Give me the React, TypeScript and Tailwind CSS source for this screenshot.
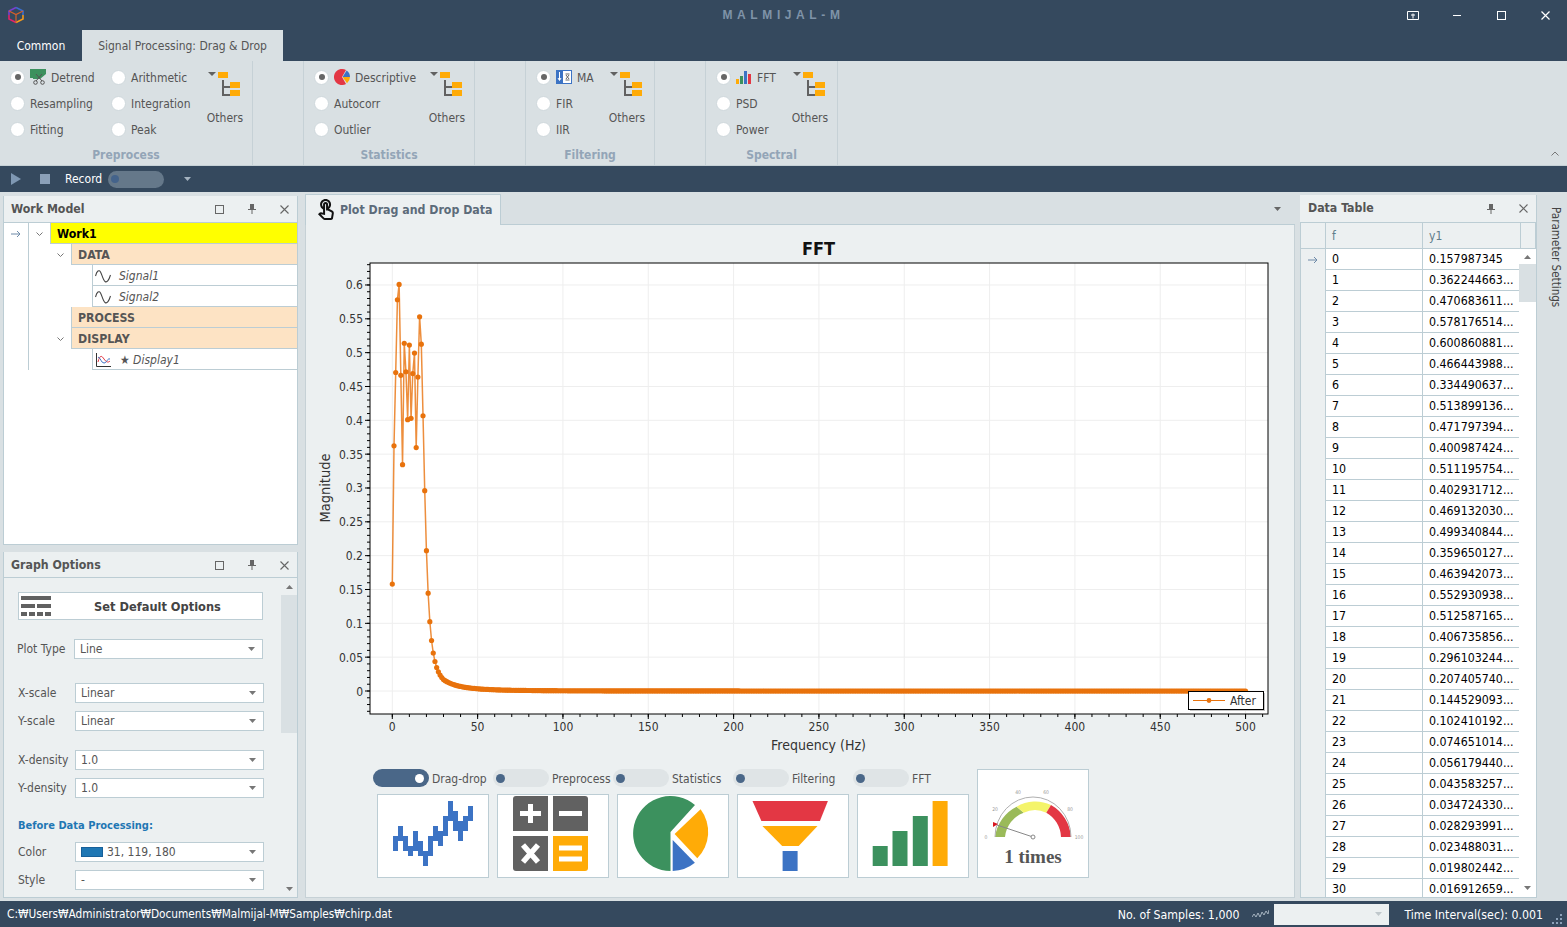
import { MdOutlineTouchApp } from 'react-icons/md';

const head = [
  0.157987345, 0.362244663, 0.470683611, 0.578176514, 0.600860881, 0.466443988, 0.334490637, 0.513899136,
  0.471797394, 0.400987424, 0.511195754, 0.402931712, 0.46913203, 0.499340844, 0.359650127, 0.463942073,
  0.552930938, 0.512587165, 0.406735856, 0.296103244, 0.20740574, 0.144529093, 0.102410192, 0.074651014,
  0.05617944, 0.043583257, 0.03472433, 0.028293991, 0.023488031, 0.019802442, 0.016912659,
];

const tableRows = [
  '0.157987345', '0.362244663...', '0.470683611...', '0.578176514...', '0.600860881...', '0.466443988...',
  '0.334490637...', '0.513899136...', '0.471797394...', '0.400987424...', '0.511195754...', '0.402931712...',
  '0.469132030...', '0.499340844...', '0.359650127...', '0.463942073...', '0.552930938...', '0.512587165...',
  '0.406735856...', '0.296103244...', '0.207405740...', '0.144529093...', '0.102410192...', '0.074651014...',
  '0.056179440...', '0.043583257...', '0.034724330...', '0.028293991...', '0.023488031...', '0.019802442...',
  '0.016912659...',
];

// Stepped signal in the drag-drop thumbnail: [top, bottom] of each 5px column
const stepColumns = [
  [42, 57], [32, 47], [42, 57], [52, 62], [37, 57], [47, 62], [57, 72], [42, 62],
  [32, 47], [37, 52], [22, 42], [7, 27], [17, 37], [27, 47], [22, 37], [12, 27],
];

const px = (f: number) => 392.3 + f * 1.7065;
const py = (v: number) => 691 - v * 676.7;

// FFT magnitude, first 31 bins from the table and a decaying tail after that
const points = Array.from({ length: 501 }, (_, f) => {
  const v = f <= 30 ? head[f] : 0.016912 * Math.pow(30 / f, 3.2);
  return [px(f), py(v)];
});

function Triangle({ className }: { className: string }) {
  return (
    <svg width="7" height="4" viewBox="0 0 7 4" className={className}>
      <path d="M0 0h7L3.5 4z" fill="currentColor" />
    </svg>
  );
}

function Others() {
  return (
    <div className="flex flex-col items-center w-[40px]">
      <svg width="33" height="24" viewBox="0 0 33 24" className="mt-[8px] ml-[-1px]">
        <path d="M0 0h8L4 4z" fill="#616161" />
        <rect x="10" y="0" width="10" height="6" fill="#ffab07" />
        <rect x="22" y="10" width="10" height="6" fill="#ffab07" />
        <rect x="22" y="18" width="10" height="6" fill="#ffab07" />
        <path d="M14 8h2v6h6v2h-6v6h6v2h-8z" fill="#616161" />
      </svg>
      <span className="mt-[13px] leading-[18px]">Others</span>
    </div>
  );
}

function Radio({ label, checked, icon }: { label: string; checked?: boolean; icon?: React.ReactNode }) {
  return (
    <div className="flex items-center h-[26px] whitespace-nowrap">
      <span className="flex items-center justify-center w-[15px] h-[15px] rounded-full bg-white border border-[#cfd8dc] mr-[5px]">
        {checked && <span className="w-[6px] h-[6px] rounded-full bg-[#666666]" />}
      </span>
      {icon}
      <span className="pt-[1px]">{label}</span>
    </div>
  );
}

function RibbonGroup({ title, width, children }: { title: string; width: string; children: React.ReactNode }) {
  return (
    <div className={`flex flex-col h-full border-r border-[#c6d1d6] ${width}`}>
      <div className="flex h-[81px] pt-[3px] pl-[10px]">{children}</div>
      <div className="flex-1 text-center font-bold text-[#93a5b7] leading-[20px] pt-[3px] text-[12px]">{title}</div>
    </div>
  );
}

function PanelHeader({ title, square, height }: { title: string; square?: boolean; height: string }) {
  return (
    <div className={`flex items-center bg-[#ecf0f1] pl-[7px] text-[#555555] font-bold text-[12.25px] ${height}`}>
      <span className="flex-1">{title}</span>
      {square && <span className="w-[9px] h-[9px] border border-[#666666] mr-[24px]" />}
      <svg width="8" height="10" viewBox="0 0 8 10" className="mr-[24px]">
        <path d="M2 0h4v5h2v1H4.500v4h-1V6H0V5h2z" fill="#666666" />
      </svg>
      <svg width="9" height="9" viewBox="0 0 9 9" className="mr-[8px]">
        <path d="M.5.5l8 8M8.500.5l-8 8" stroke="#666666" strokeWidth="1.1" />
      </svg>
    </div>
  );
}

function Combo({ value, className, swatch }: { value: string; className: string; swatch?: boolean }) {
  return (
    <div className={`flex items-center h-[20px] bg-white border border-[#bccdd4] pl-[5px] pr-[7px] ${className}`}>
      {swatch && <span className="w-[22px] h-[10px] bg-[#1f77b4] border border-[#17609a] mr-[4px]" />}
      <span className="flex-1 text-[#555555]">{value}</span>
      <Triangle className="text-[#777777]" />
    </div>
  );
}

function FieldRow({ label, value, className, swatch }: { label: string; value: string; className: string; swatch?: boolean }) {
  return (
    <div className={`flex items-center ml-[1px] ${className}`}>
      <span className="w-[57px] text-[#555555]">{label}</span>
      <Combo value={value} swatch={swatch} className="w-[189px]" />
    </div>
  );
}

function TreeRow({ level, chevron, arrow, children, className }: { level: number; chevron?: boolean; arrow?: boolean; children: React.ReactNode; className: string }) {
  const indents = ['w-[21px]', 'w-[42px]', 'w-[63px]'];
  return (
    <div className="flex h-[21px]">
      <div className="flex items-center w-[25px] border-r border-[#bccdd4] pl-[7px]">
        {arrow && (
          <svg width="10" height="8" viewBox="0 0 10 8">
            <path d="M0 4h9M6 1l3 3-3 3" stroke="#6e8aa8" fill="none" />
          </svg>
        )}
      </div>
      <div className={`flex items-center justify-end pr-[7px] ${indents[level]}`}>
        {chevron && (
          <svg width="7" height="4" viewBox="0 0 7 4">
            <path d="M.5.5l3 3 3-3" stroke="#777777" fill="none" />
          </svg>
        )}
      </div>
      <div className={`flex items-center flex-1 border-b border-l border-[#bccdd4] pt-[1px] ${className}`}>{children}</div>
    </div>
  );
}

function SignalIcon() {
  return (
    <svg width="16" height="14" viewBox="0 0 16 14" className="ml-[2px] mr-[8px]">
      <path d="M.5 7C2 1.500 4 .5 5.500 3S8 11 10 12.500 14 11 15.500 6" stroke="#444444" fill="none" strokeWidth="1.1" />
    </svg>
  );
}

function Toggle({ on }: { on?: boolean }) {
  return (
    <span className={`flex items-center w-[56px] h-[18px] rounded-full ${on ? 'bg-[#4a6788] justify-end pr-[5px]' : 'bg-[#dfe4e6] pl-[3px]'}`}>
      <span className={`w-[9px] h-[9px] rounded-full ${on ? 'bg-white' : 'bg-[#4a6788]'}`} />
    </span>
  );
}

function Thumb({ label, on, children }: { label: string; on?: boolean; children: React.ReactNode }) {
  return (
    <div className="w-[120px]">
      <div className="flex items-center h-[18px] whitespace-nowrap text-[#555555]">
        <Toggle on={on} />
        <span className="ml-[3px] pt-[1px]">{label}</span>
      </div>
      <div className="w-[112px] h-[84px] ml-[4px] mt-[7px] bg-white border border-[#bccdd4]">
        <svg width="110" height="82" viewBox="1 1 110 82">{children}</svg>
      </div>
    </div>
  );
}

function Chart() {
  const yTicks = Array.from({ length: 13 }, (_, i) => i * 0.05);
  const yMinor = Array.from({ length: 67 }, (_, i) => -0.03 + i * 0.01);
  const xTicks = Array.from({ length: 11 }, (_, i) => i * 50);
  const xMinor = Array.from({ length: 52 }, (_, i) => i * 10);
  const line = points.map((p) => p.join(',')).join(' ');
  return (
    <svg width="988" height="534" viewBox="306 226 988 534" className="block">
      <text x="818.5" y="255" textAnchor="middle" fontSize="18" fontWeight="700" fill="#111111">FFT</text>
      <rect x="370" y="263" width="898" height="451" fill="#ffffff" />
      {xTicks.map((t) => (
        <line key={t} x1={px(t)} x2={px(t)} y1="263" y2="714" stroke="#eeeeee" />
      ))}
      {yTicks.map((t) => (
        <line key={t} x1="370" x2="1268" y1={py(t)} y2={py(t)} stroke="#eeeeee" />
      ))}
      <polyline points={line} fill="none" stroke="#e8720c" strokeOpacity="0.8" strokeWidth="1.5" />
      {points.map((p, i) => (
        <circle key={i} cx={p[0]} cy={p[1]} r="2.6" fill="#e8720c" />
      ))}
      <rect x="370" y="263" width="898" height="451" fill="none" stroke="#000000" />
      {yMinor.map((t) => (
        <line key={t} x1="367" x2="370" y1={py(t)} y2={py(t)} stroke="#000000" />
      ))}
      {yTicks.map((t, i) => (
        <g key={t}>
          <line x1="365" x2="370" y1={py(t)} y2={py(t)} stroke="#000000" />
          <text x="363" y={py(t) + 4.5} textAnchor="end" fontSize="12" fill="#333333">
            {i === 0 ? '0' : String(Math.round(t * 100) / 100)}
          </text>
        </g>
      ))}
      {xMinor.map((t) => (
        <line key={t} x1={px(t)} x2={px(t)} y1="714" y2="717" stroke="#000000" />
      ))}
      {xTicks.map((t) => (
        <g key={t}>
          <line x1={px(t)} x2={px(t)} y1="714" y2="719" stroke="#000000" />
          <text x={px(t)} y="731" textAnchor="middle" fontSize="12" fill="#333333">{t}</text>
        </g>
      ))}
      <text x="818.5" y="750" textAnchor="middle" fontSize="14" fill="#333333">Frequency (Hz)</text>
      <text x="0" y="0" textAnchor="middle" fontSize="14.500" fill="#333333" transform="translate(330 488) rotate(-90)">Magnitude</text>
      <rect x="1190" y="693" width="75" height="18" fill="#c4c4c4" />
      <rect x="1188.5" y="691.5" width="75" height="18" fill="#ffffff" stroke="#000000" />
      <line x1="1193" x2="1225" y1="700.5" y2="700.5" stroke="#e8720c" />
      <circle cx="1209" cy="700.5" r="2.4" fill="#e8720c" />
      <text x="1230" y="704.5" fontSize="12" fill="#333333">After</text>
    </svg>
  );
}

export default function App() {
  return (
    <div className="w-[1567px] h-[927px] overflow-hidden bg-[#d9e0e3] text-[12px] text-[#555555] font-['DejaVu_Sans_Condensed','DejaVu_Sans',sans-serif]">
      {/* Title bar */}
      <div className="flex items-center h-[30px] bg-[#35495e]">
        <div className="w-[176px] pl-[7px] flex items-center">
          <svg width="18" height="18" viewBox="0 0 18 18">
            <path d="M9 1.500l7 3.500v4" stroke="#3b6fd0" strokeWidth="1.6" fill="none" />
            <path d="M9 1.500L2 5v4" stroke="#7a3fd0" strokeWidth="1.6" fill="none" />
            <path d="M2 9v4l7 3.500" stroke="#e0246a" strokeWidth="1.6" fill="none" />
            <path d="M16 9v4l-7 3.500" stroke="#f39a1c" strokeWidth="1.6" fill="none" />
            <path d="M2 5l7 3.500L16 5M9 8.500v8" stroke="#d8602a" strokeWidth="1.2" fill="none" />
          </svg>
        </div>
        <div className="flex-1 text-center text-[#7f93a8] font-bold text-[12px] tracking-[4.6px] font-['Liberation_Sans',sans-serif]">MALMIJAL-M</div>
        <div className="flex w-[176px]">
          <div className="flex items-center justify-center w-[44px]">
            <svg width="12" height="9" viewBox="0 0 12 9">
              <path d="M.5.5h11v8H.5zM6 2.500v5M4 4h4" stroke="#ffffff" fill="none" />
            </svg>
          </div>
          <div className="flex items-center justify-center w-[44px]">
            <span className="w-[8px] h-[1px] bg-white" />
          </div>
          <div className="flex items-center justify-center w-[44px]">
            <span className="w-[9px] h-[9px] border border-white" />
          </div>
          <div className="flex items-center justify-center w-[44px]">
            <svg width="9" height="9" viewBox="0 0 9 9">
              <path d="M.5.5l8 8M8.500.5l-8 8" stroke="#ffffff" strokeWidth="1.2" />
            </svg>
          </div>
        </div>
      </div>

      {/* Tabs */}
      <div className="flex h-[31px] bg-[#35495e]">
        <div className="flex items-center justify-center w-[82px] text-white">Common</div>
        <div className="flex items-center justify-center w-[201px] bg-[#d9e0e3]">Signal Processing: Drag &amp; Drop</div>
      </div>

      {/* Ribbon */}
      <div className="flex items-stretch h-[105px] bg-[#d9e0e3] border-b border-[#c6d1d6] relative">
        <RibbonGroup title="Preprocess" width="w-[253px]">
          <div className="w-[101px]">
            <Radio
              label="Detrend"
              checked
              icon={
                <svg width="16" height="16" viewBox="0 0 16 16" className="mr-[5px]">
                  <path d="M0 0h16v5l-6 5H3v-1H0z" fill="#3c915e" />
                  <path d="M6 5l6 7M12 5l-6 7" stroke="#555555" />
                  <circle cx="5.500" cy="13.500" r="1.8" fill="none" stroke="#555555" />
                  <circle cx="12.500" cy="13.500" r="1.8" fill="none" stroke="#555555" />
                </svg>
              }
            />
            <Radio label="Resampling" />
            <Radio label="Fitting" />
          </div>
          <div className="w-[94px]">
            <Radio label="Arithmetic" />
            <Radio label="Integration" />
            <Radio label="Peak" />
          </div>
          <Others />
        </RibbonGroup>
        <div className="w-[51px] border-r border-[#c6d1d6]" />
        <RibbonGroup title="Statistics" width="w-[171px]">
          <div className="w-[113px]">
            <Radio
              label="Descriptive"
              checked
              icon={
                <svg width="16" height="16" viewBox="0 0 16 16" className="mr-[5px]">
                  <path d="M8 8l4-6.900A8 8 0 1 0 12 14.900z" fill="#e33744" />
                  <path d="M8.600 8l4-6.500A8 8 0 0 1 16 8z" fill="#3c73c4" />
                  <path d="M8.600 8H16a8 8 0 0 1-3 6.200z" fill="#ffab07" />
                </svg>
              }
            />
            <Radio label="Autocorr" />
            <Radio label="Outlier" />
          </div>
          <Others />
        </RibbonGroup>
        <div className="w-[51px] border-r border-[#c6d1d6]" />
        <RibbonGroup title="Filtering" width="w-[129px]">
          <div className="w-[71px]">
            <Radio
              label="MA"
              checked
              icon={
                <svg width="16" height="14" viewBox="0 0 16 14" className="mr-[5px]">
                  <rect x=".5" y=".5" width="15" height="13" fill="#ffffff" stroke="#3c73c4" />
                  <rect width="7" height="14" fill="#3c73c4" />
                  <path d="M3.500 2v8M2 8l1.500 2.500L5 8" stroke="#ffffff" fill="none" />
                  <path d="M9.500 4h4M9.500 10h4M10 5l3 4M13 5l-3 4" stroke="#666666" fill="none" />
                </svg>
              }
            />
            <Radio label="FIR" />
            <Radio label="IIR" />
          </div>
          <Others />
        </RibbonGroup>
        <div className="w-[51px] border-r border-[#c6d1d6]" />
        <RibbonGroup title="Spectral" width="w-[132px]">
          <div className="w-[74px]">
            <Radio
              label="FFT"
              checked
              icon={
                <svg width="15" height="13" viewBox="0 0 15 13" className="mr-[6px]">
                  <rect x="0" y="8" width="3" height="5" fill="#ffab07" />
                  <rect x="4" y="5" width="3" height="8" fill="#3c915e" />
                  <rect x="8" y="0" width="3" height="13" fill="#3c73c4" />
                  <rect x="12" y="3" width="3" height="10" fill="#e33744" />
                </svg>
              }
            />
            <Radio label="PSD" />
            <Radio label="Power" />
          </div>
          <Others />
        </RibbonGroup>
        <svg width="8" height="5" viewBox="0 0 8 5" className="absolute right-[8px] bottom-[9px]">
          <path d="M.5 4.500L4 1l3.500 3.500" stroke="#777777" fill="none" />
        </svg>
      </div>

      {/* Toolbar */}
      <div className="flex items-center h-[26px] bg-[#35495e] text-white">
        <svg width="10" height="12" viewBox="0 0 10 12" className="ml-[11px]">
          <path d="M0 0l10 6-10 6z" fill="#7f98b3" />
        </svg>
        <span className="w-[10px] h-[10px] bg-[#8ba0b8] ml-[19px]" />
        <span className="ml-[15px]">Record</span>
        <span className="flex items-center w-[56px] h-[17px] rounded-full bg-[#65788a] ml-[6px] pl-[3px]">
          <span className="w-[8px] h-[8px] rounded-full bg-[#44638b]" />
        </span>
        <Triangle className="text-[#a5b3c0] ml-[20px]" />
      </div>

      {/* Main area */}
      <div className="flex h-[709px] bg-[#d9e0e3]">
        {/* Left column */}
        <div className="w-[295px] ml-[3px] pt-[4px]">
          <div className="h-[349px] flex flex-col border border-t-0 border-[#bccdd4] bg-white">
            <div className="border-b border-[#bccdd4]">
              <PanelHeader title="Work Model" square height="h-[26px]" />
            </div>
            <div>
              <TreeRow level={0} chevron arrow className="bg-[#ffff00]">
                <span className="pl-[6px] pt-[1px] font-bold text-black text-[12.25px]">Work1</span>
              </TreeRow>
              <TreeRow level={1} chevron className="bg-[#fde3c4]">
                <span className="pl-[6px] pt-[1px] font-bold text-[12.25px]">DATA</span>
              </TreeRow>
              <TreeRow level={2} className="bg-white">
                <SignalIcon />
                <span className="italic">Signal1</span>
              </TreeRow>
              <TreeRow level={2} className="bg-white">
                <SignalIcon />
                <span className="italic">Signal2</span>
              </TreeRow>
              <TreeRow level={1} className="bg-[#fde3c4]">
                <span className="pl-[6px] pt-[1px] font-bold text-[12.25px]">PROCESS</span>
              </TreeRow>
              <TreeRow level={1} chevron className="bg-[#fde3c4]">
                <span className="pl-[6px] pt-[1px] font-bold text-[12.25px]">DISPLAY</span>
              </TreeRow>
              <TreeRow level={2} className="bg-white">
                <svg width="15" height="14" viewBox="0 0 15 14" className="ml-[3px] mr-[9px]">
                  <path d="M.5 0v13.500H15" stroke="#333333" fill="none" />
                  <path d="M2 9c2-8 4-6 6-3s4 4 6 2" stroke="#e33744" fill="none" />
                  <path d="M2 4c3 1 3 6 6 6s3-5 6-4" stroke="#3c73c4" fill="none" />
                </svg>
                <span className="italic">★ Display1</span>
              </TreeRow>
            </div>
          </div>

          <div className="h-[346px] mt-[7px] flex flex-col border border-t-0 border-[#bccdd4] bg-[#ecf0f1]">
            <div className="border-b border-[#bccdd4]">
              <PanelHeader title="Graph Options" square height="h-[25px] pt-[1px]" />
            </div>
            <div className="flex flex-1 overflow-hidden">
              <div className="flex-1 pl-[13px] text-[#555555]">
                <div className="flex items-center ml-[1px] mt-[14px] w-[245px] h-[28px] bg-white border border-[#bccdd4]">
                  <svg width="30" height="20" viewBox="0 0 30 20" className="ml-[2px]">
                    <rect width="30" height="4" fill="#616161" />
                    <rect y="8" width="14" height="4" fill="#616161" />
                    <rect x="16" y="8" width="14" height="4" fill="#616161" />
                    <rect y="16" width="6" height="4" fill="#616161" />
                    <rect x="8" y="16" width="6" height="4" fill="#616161" />
                    <rect x="16" y="16" width="6" height="4" fill="#616161" />
                    <rect x="24" y="16" width="6" height="4" fill="#616161" />
                  </svg>
                  <span className="flex-1 text-center font-bold text-[12.7px] pl-[2px] pt-[1px] text-[#444444]">Set Default Options</span>
                </div>
                <div className="flex items-center mt-[19px]">
                  <span className="w-[57px]">Plot Type</span>
                  <Combo value="Line" className="w-[189px]" />
                </div>
                <FieldRow label="X-scale" value="Linear" className="mt-[24px]" />
                <FieldRow label="Y-scale" value="Linear" className="mt-[8px]" />
                <FieldRow label="X-density" value="1.0" className="mt-[19px]" />
                <FieldRow label="Y-density" value="1.0" className="mt-[8px]" />
                <div className="h-[16px] mt-[19px] ml-[1px] pt-[1px] font-bold text-[11px] text-[#1f77b4] leading-[16px]">Before Data Processing:</div>
                <FieldRow label="Color" value="31, 119, 180" swatch className="mt-[9px]" />
                <FieldRow label="Style" value="-" className="mt-[8px]" />
                <div className="ml-[58px] mt-[7px] w-[189px] h-[20px] bg-white border border-[#bccdd4]" />
              </div>
              <div className="flex flex-col items-center w-[16px] pt-[7px]">
                <svg width="7" height="4" viewBox="0 0 7 4"><path d="M0 4h7L3.500 0z" fill="#777777" /></svg>
                <div className="w-full h-[138px] bg-[#d9e0e3] mt-[6px]" />
                <svg width="7" height="4" viewBox="0 0 7 4" className="mt-[154px]"><path d="M0 0h7L3.500 4z" fill="#777777" /></svg>
              </div>
            </div>
          </div>
        </div>

        {/* Center document */}
        <div className="w-[990px] ml-[7px] pt-[2px]">
          <div className="flex h-[31px] border-b border-[#bccdd4]">
            <div className="flex items-center w-[196px] h-[31px] bg-[#ecf0f1] border border-b-0 border-[#bccdd4] pl-[8px]">
              <MdOutlineTouchApp size={24} className="text-[#111111]" />
              <span className="ml-[2px] font-bold text-[12.25px] text-[#5c6b7a] whitespace-nowrap">Plot Drag and Drop Data</span>
            </div>
            <div className="flex-1 flex items-center justify-end pr-[14px]">
              <Triangle className="text-[#666666]" />
            </div>
          </div>
          <div className="h-[673px] pt-[1px] bg-[#ecf0f1] border-x border-b border-[#c6d1d6]">
            <Chart />
            <div className="flex items-start mt-[9px] ml-[67px]">
              <Thumb label="Drag-drop" on>
                {stepColumns.map((c, i) => (
                  <rect key={i} x={16 + i * 5} y={c[0]} width="5" height={c[1] - c[0]} fill="#3c73c4" />
                ))}
              </Thumb>
              <Thumb label="Preprocess">
                <path d="M19 2h32v35H16V5a3 3 0 0 1 3-3z" fill="#616161" />
                <path d="M56 2h32a3 3 0 0 1 3 3v32H56z" fill="#616161" />
                <path d="M16 42h35v35H19a3 3 0 0 1-3-3z" fill="#616161" />
                <path d="M56 42h35v32a3 3 0 0 1-3 3H56z" fill="#ffab07" />
                <path d="M33.500 10v19M23 19.500h21M62 19.500h23" stroke="#ffffff" strokeWidth="5" />
                <path d="M26 51l15 17M41 51L26 68" stroke="#ffffff" strokeWidth="5.500" />
                <path d="M62 54h23M62 65h23" stroke="#ffffff" strokeWidth="5" />
              </Thumb>
              <Thumb label="Statistics">
                <path d="M53.500 38L78 11A37.500 37.500 0 1 0 53.500 77z" fill="#3c915e" />
                <path d="M57.600 40L83.600 15.300A37.500 37.500 0 0 1 80.300 64.300z" fill="#ffab07" />
                <path d="M55.700 46L77.900 68.700A37.500 37.500 0 0 1 55.700 77z" fill="#3c73c4" />
              </Thumb>
              <Thumb label="Filtering">
                <path d="M15.500 7H90.900L82.900 27H24.400z" fill="#e33744" />
                <path d="M25.400 32H80.500L61.700 52H45.200z" fill="#ffab07" />
                <rect x="45.600" y="57" width="15" height="20" fill="#3c73c4" />
              </Thumb>
              <Thumb label="FFT">
                <rect x="15.700" y="52" width="15" height="20" fill="#3c915e" />
                <rect x="35.500" y="37" width="15" height="35" fill="#3c915e" />
                <rect x="55.800" y="22" width="15" height="50" fill="#3c915e" />
                <rect x="75.600" y="7" width="15" height="65" fill="#ffab07" />
              </Thumb>
              <div className="w-[112px] h-[109px] ml-[4px] bg-white border border-[#bccdd4] flex flex-col items-center">
                <svg width="110" height="80" viewBox="1 1 110 80" className="shrink-0">
                  <path d="M18 68A38 40 0 0 1 39.600 37.700L46.700 43.700A28 29 0 0 0 28 68z" fill="#9aba59" />
                  <path d="M39.600 37.700A38 40 0 0 1 74 36L69.300 43.700A28 29 0 0 0 46.700 43.700z" fill="#f4f46a" />
                  <path d="M74 36A38 40 0 0 1 94 68H84A28 29 0 0 0 69.300 43.700z" fill="#e33744" />
                  <path d="M18 68A38 40 0 0 1 94 68" fill="none" stroke="#b0b0b0" />
                  <path d="M20 56l36 12" stroke="#888888" />
                  <circle cx="56" cy="68" r="2" fill="#ffffff" stroke="#888888" />
                  <path d="M16 53l5 2-5 3z" fill="#d8161f" />
                  <g fontSize="5" fill="#999999" textAnchor="middle">
                    <text x="9" y="70">0</text>
                    <text x="18" y="42">20</text>
                    <text x="41" y="25">40</text>
                    <text x="69" y="25">60</text>
                    <text x="93" y="42">80</text>
                    <text x="102" y="70">100</text>
                  </g>
                </svg>
                <span className="text-[19px] font-bold leading-[20px] font-['Liberation_Serif',serif] text-[#555555] mt-[-3px]">1 times</span>
              </div>
            </div>
          </div>
        </div>

        {/* Data table */}
        <div className="w-[237px] ml-[5px] pt-[3px]">
          <div className="h-[703px] flex flex-col border-r border-b border-[#bccdd4] bg-[#ecf0f1]">
            <PanelHeader title="Data Table" height="h-[27px] pl-[8px]" />
            <div className="flex h-[27px] border border-[#bccdd4] text-[#607d8b] bg-[#ecf0f1]">
              <div className="w-[25px] border-r border-[#bccdd4]" />
              <div className="flex items-center w-[97px] pl-[6px] border-r border-[#bccdd4]">f</div>
              <div className="flex items-center w-[98px] pl-[6px] border-r border-[#bccdd4]">y1</div>
            </div>
            <div className="flex flex-1 overflow-hidden border-l border-[#bccdd4]">
              <div className="flex-1 overflow-hidden text-black text-[12.3px]">
                {tableRows.map((v, i) => (
                  <div key={i} className="flex h-[21px]">
                    <div className="flex items-center w-[25px] pl-[7px] bg-[#ecf0f1] border-r border-[#bccdd4]">
                      {i === 0 && (
                        <svg width="10" height="8" viewBox="0 0 10 8">
                          <path d="M0 4h9M6 1l3 3-3 3" stroke="#6e8aa8" fill="none" />
                        </svg>
                      )}
                    </div>
                    <div className="flex items-center w-[97px] pl-[6px] pt-[1px] bg-white border-r border-b border-[#bccdd4]">{i}</div>
                    <div className="flex items-center flex-1 pl-[6px] pt-[1px] bg-white border-b border-[#bccdd4] whitespace-nowrap">{v}</div>
                  </div>
                ))}
              </div>
              <div className="flex flex-col items-center w-[17px] pt-[6px] bg-white">
                <svg width="7" height="4" viewBox="0 0 7 4"><path d="M0 4h7L3.500 0z" fill="#777777" /></svg>
                <div className="w-full h-[38px] bg-[#d9e0e3] mt-[5px]" />
                <svg width="7" height="4" viewBox="0 0 7 4" className="mt-[584px]"><path d="M0 0h7L3.500 4z" fill="#777777" /></svg>
              </div>
            </div>
          </div>
        </div>

        {/* Parameter settings strip */}
        <div className="w-[30px] pt-[15px] pl-[10px]">
          <span className="[writing-mode:vertical-rl] text-[11.6px] text-[#444444] whitespace-nowrap">Parameter Settings</span>
        </div>
      </div>

      {/* Status bar */}
      <div className="flex items-center h-[26px] bg-[#35495e] text-white text-[12.25px] pl-[7px]">
        <span className="flex-1 pt-[2px] text-[11.75px] whitespace-nowrap">C:₩Users₩Administrator₩Documents₩Malmijal-M₩Samples₩chirp.dat</span>
        <span className="pt-[2px]">No. of Samples: 1,000</span>
        <svg width="17" height="10" viewBox="0 0 17 10" className="ml-[13px] mr-[5px]">
          <path d="M0 8l2-3 2 3 2-4 2 4 2-5 2 3 2-4 2 3 1-4" stroke="#a5b3c0" fill="none" />
        </svg>
        <div className="flex items-center justify-end w-[115px] h-[21px] bg-[#ecf0f1] pr-[7px]">
          <Triangle className="text-[#c0c8cc]" />
        </div>
        <span className="ml-[15px] pt-[2px]">Time Interval(sec): 0.001</span>
        <svg width="11" height="11" viewBox="0 0 11 11" className="ml-[8px] mr-[5px] mt-[8px]">
          <path d="M9 1h2v2H9zM5 5h2v2H5zM9 5h2v2H9zM1 9h2v2H1zM5 9h2v2H5zM9 9h2v2H9z" fill="#8ba0b8" />
        </svg>
      </div>
    </div>
  );
}
